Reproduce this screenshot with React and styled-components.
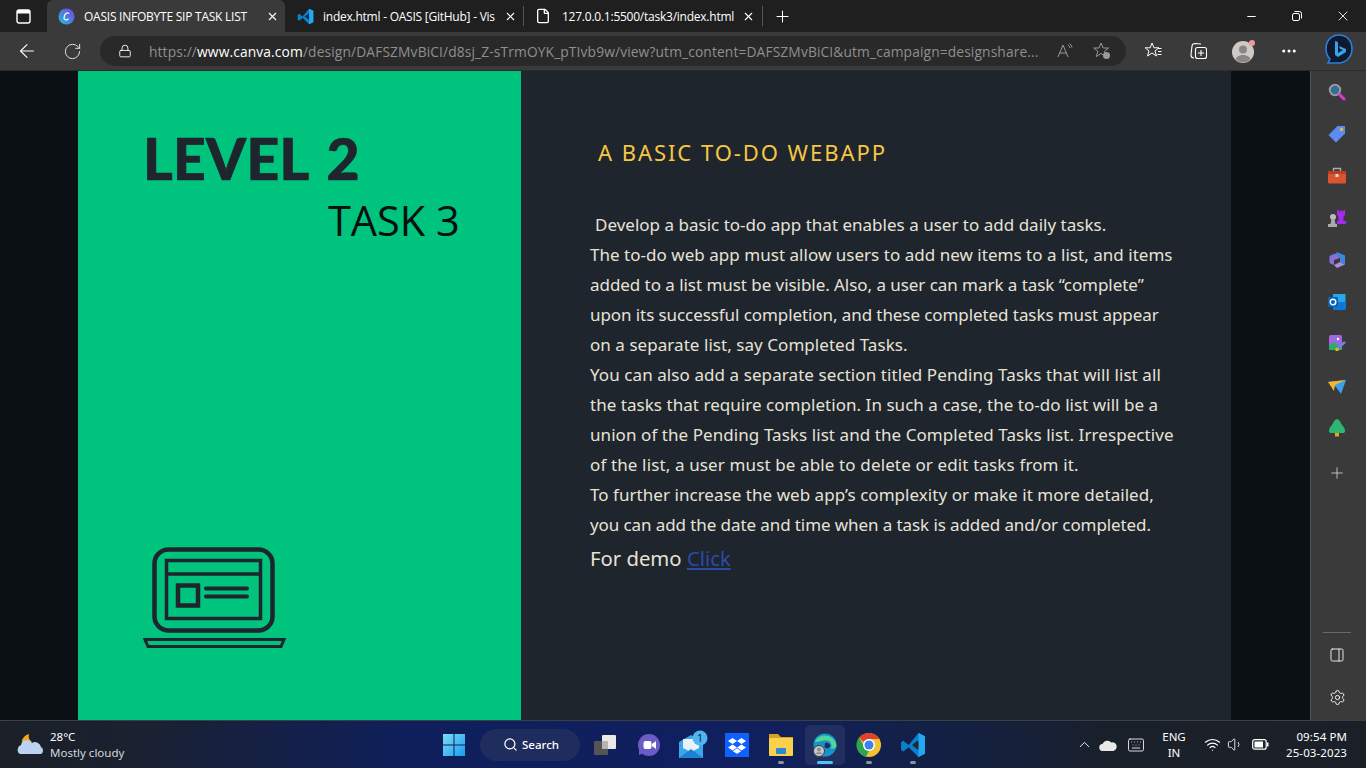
import React from 'react'
import styled, { createGlobalStyle } from 'styled-components'
import { ArrowLeft, RotateCw, Lock, X, Plus, Minus, File, Search, MoreHorizontal, Settings, PanelRight, ChevronUp, Wifi, Volume1, Keyboard } from 'lucide-react'

const GlobalStyle = createGlobalStyle`
  html, body { margin: 0; padding: 0; background: #1f1f1f; overflow: hidden; }
  * { box-sizing: border-box; }
  body { font-family: "Open Sans", "Liberation Sans", sans-serif; }
`

const Screen = styled.div`
  width: 1366px;
  height: 768px;
  display: flex;
  flex-direction: column;
  overflow: hidden;
`

const TabBar = styled.div`
  height: 32px;
  background: #1f1f1f;
  display: flex;
  align-items: flex-end;
  color: #fff;
  flex: none;
`

const WinSquare = styled.div`
  width: 47px;
  height: 32px;
  display: flex;
  align-items: center;
  justify-content: center;
  svg { display: block; }
`

const Tab = styled.div`
  width: ${p => p.$w}px;
  height: 32px;
  background: ${p => (p.$active ? '#3a3a3a' : 'transparent')};
  border-radius: 6px 6px 0 0;
  display: flex;
  align-items: center;
  padding: 0 0 0 ${p => p.$pad}px;
  flex: none;
`

const TabTitle = styled.span`
  font-size: 12px;
  letter-spacing: -0.24px;
  margin-left: ${p => p.$gap}px;
  width: ${p => p.$w}px;
  white-space: nowrap;
  color: #fff;
  flex: none;
`

const TabClose = styled(X)`
  margin-left: ${p => p.$gap}px;
  flex: none;
`

const TabSep = styled.div`
  width: 1px;
  height: 20px;
  background: #555;
  flex: none;
  align-self: center;
`

const NewTab = styled.div`
  width: 38px;
  height: 32px;
  display: flex;
  align-items: center;
  justify-content: center;
`

const WinControls = styled.div`
  margin-left: auto;
  display: flex;
  height: 32px;
  align-items: center;
`

const WinButton = styled.div`
  width: 46px;
  height: 32px;
  display: flex;
  align-items: center;
  justify-content: center;
`

const Toolbar = styled.div`
  height: 39px;
  background: #3a3a3a;
  display: flex;
  align-items: center;
  flex: none;
  border-bottom: 1px solid #2b2b2b;
  padding-left: 9px;
`

const ToolButton = styled.div`
  width: ${p => p.$w || 36}px;
  height: 32px;
  margin-left: ${p => p.$gap || 0}px;
  display: flex;
  align-items: center;
  justify-content: center;
  flex: none;
`

const AddressBar = styled.div`
  width: 1026px;
  height: 30px;
  margin-left: 1px;
  background: #292929;
  border-radius: 15px;
  display: flex;
  align-items: center;
  padding-left: 18px;
  flex: none;
`

const Url = styled.span`
  margin-left: 17px;
  width: 897px;
  font-size: 13.8px;
  color: #8f8f8f;
  white-space: nowrap;
  letter-spacing: 0.12px;
  flex: none;
  b { font-weight: 400; color: #fff; }
`

const AddressIcon = styled.svg`
  margin-left: ${p => p.$gap}px;
  flex: none;
`

const Middle = styled.div`
  flex: 1;
  display: flex;
  min-height: 0;
`

const Page = styled.div`
  width: 1310px;
  background: #0a1014;
  padding-left: 78px;
  flex: none;
`

const Slide = styled.div`
  width: 1153px;
  height: 100%;
  display: flex;
`

const GreenPanel = styled.div`
  width: 443px;
  background: #00c37e;
  padding: 54px 0 0 65px;
  display: flex;
  flex-direction: column;
`

const Level = styled.h1`
  margin: 0;
  font-family: "Lato", "Liberation Sans", sans-serif;
  font-weight: 900;
  font-size: 57px;
  line-height: 67px;
  letter-spacing: 0.3px;
  word-spacing: 5px;
  -webkit-text-stroke: 0.7px #1e252c;
  color: #1e252c;
  white-space: nowrap;
`

const Task = styled.div`
  margin: 0 0 0 185px;
  font-size: 41.5px;
  line-height: 56px;
  color: #0a0f10;
  white-space: nowrap;
`

const LaptopIcon = styled.svg`
  margin-top: 299px;
  display: block;
`

const TextPanel = styled.div`
  flex: 1;
  background: #1e252c;
  padding: 64px 0 0 69px;
  color: #e6e2d8;
`

const Heading = styled.h2`
  margin: 0 0 0 8px;
  font-family: "Noto Sans", sans-serif;
  font-weight: 400;
  font-size: 22px;
  line-height: 34px;
  letter-spacing: 1.95px;
  color: #f7c744;
`

const Body = styled.div`
  margin-top: 41px;
  font-family: "Noto Sans", sans-serif;
  font-size: 17px;
  line-height: 30px;
`

const Line = styled.div`
  white-space: nowrap;
  padding-left: ${p => p.$indent || 0}px;
  letter-spacing: ${p => p.$track || 0.03}px;
`

const Demo = styled.div`
  font-family: "Noto Sans", sans-serif;
  font-size: 20.3px;
  line-height: 34px;
  margin-top: 1px;
  a { color: #2c4aa8; text-decoration: underline; }
`

const SideBar = styled.div`
  width: 56px;
  background: #3a3a3a;
  border-left: 1px solid #555;
  padding-right: 3px;
  display: flex;
  flex-direction: column;
  align-items: center;
`

const SideIcon = styled.div`
  height: 42px;
  width: 100%;
  margin-top: ${p => p.$gap || 0}px;
  display: flex;
  align-items: center;
  justify-content: center;
  flex: none;
`

const SideBottom = styled.div`
  margin-top: auto;
  width: 100%;
  display: flex;
  flex-direction: column;
  align-items: center;
  padding-bottom: 2px;
`

const SideRule = styled.div`
  width: 28px;
  height: 1px;
  background: #6a6a6a;
  margin-bottom: 1px;
`

const Taskbar = styled.div`
  height: 48px;
  flex: none;
  background: linear-gradient(90deg, #1b2028 0%, #1a2130 10%, #0f1f5c 30%, #10205e 55%, #14203e 72%, #1a2029 82%, #1b2028 100%);
  border-top: 1px solid #3a3f48;
  display: flex;
  align-items: center;
  color: #fff;
`

const Weather = styled.div`
  display: flex;
  align-items: center;
  width: 442px;
  padding-left: 17px;
  flex: none;
`

const WeatherText = styled.div`
  margin-left: 5px;
  font-family: "Noto Sans", sans-serif;
  font-size: 11.5px;
  line-height: 16px;
  span { display: block; }
  span + span { color: #d5d8dc; }
`

const SearchPill = styled.div`
  width: 100px;
  height: 32px;
  border-radius: 16px;
  background: #1f2c5e;
  margin-left: 14px;
  display: flex;
  align-items: center;
  padding-left: 23px;
  font-family: "Noto Sans", sans-serif;
  font-size: 11.5px;
  font-weight: 500;
  flex: none;
  span { margin-left: 4px; }
`

const Pinned = styled.div`
  display: flex;
  align-items: center;
  margin-left: 3px;
`

const Pin = styled.div`
  width: 40px;
  height: 40px;
  margin: 0 2px;
  display: flex;
  align-items: center;
  justify-content: center;
  position: relative;
  border-radius: 5px;
  background: ${p => (p.$active ? 'rgba(255,255,255,0.07)' : 'transparent')};
  &::after {
    content: '';
    display: ${p => (p.$dot ? 'block' : 'none')};
    position: absolute;
    bottom: 1px;
    left: 50%;
    transform: translateX(-50%);
    width: ${p => (p.$active ? 16 : 6)}px;
    height: 3px;
    border-radius: 2px;
    background: ${p => (p.$active ? '#4fc3f7' : '#8d93a0')};
  }
`

const Tray = styled.div`
  margin-left: auto;
  display: flex;
  align-items: center;
  height: 100%;
  padding-right: 19px;
  font-family: "Noto Sans", sans-serif;
  font-size: 11.5px;
`

const Lang = styled.div`
  width: 50px;
  margin-left: 4px;
  text-align: center;
  line-height: 16px;
`

const Clock = styled.div`
  width: 70px;
  margin-left: 8px;
  text-align: right;
  line-height: 16px;
  white-space: nowrap;
  letter-spacing: 0.1px;
`

const VsCode = ({ size = 18 }) => (
  <svg width={size} height={size} viewBox="0 0 24 24">
    <path fill="#0a7fcc" d="M17 1l6 3v16l-6 3-9-9-5 4-2-1.5v-7L3 8l5 4z" />
    <path fill="#23a9f2" d="M17 1l6 3v16l-6 3z" />
    <path fill="#1f1f1f" d="M17 7.5L11 12l6 4.5z" opacity=".9" />
  </svg>
)

const sideIcons = [
  <svg key="s" width="20" height="20" viewBox="0 0 20 20"><circle cx="8" cy="8" r="5.2" fill="#2f6f98" stroke="#9a9a9a" strokeWidth="2" /><path d="M12.5 12.5L17 17" stroke="#d63ad8" strokeWidth="3" strokeLinecap="round" /></svg>,
  <svg key="t" width="20" height="20" viewBox="0 0 20 20"><path fill="#5b8cf5" d="M1.5 11l9-9h7.5v7.5l-9 9z" /><circle cx="14.5" cy="5.5" r="1.7" fill="#f2b632" /></svg>,
  <svg key="b" width="20" height="20" viewBox="0 0 20 20"><path fill="none" stroke="#aaa" strokeWidth="1.4" d="M6.5 5V2.5h7V5" /><rect x="1" y="5" width="18" height="12.5" rx="1.5" fill="#d9552f" /><rect x="1" y="5" width="18" height="3" fill="#b9411f" /><rect x="8.5" y="8" width="3" height="3" fill="#ddd" /></svg>,
  <svg key="c" width="20" height="20" viewBox="0 0 20 20"><path fill="#a32cf0" d="M10 2h1.8v1.5h1.6V2h1.4v1.5h1.6V2H18v5l-1.5 1.5V13H19v3h-9v-3h1.5V8.5L10 7z" /><circle cx="6" cy="9" r="3" fill="#bbb" /><path fill="#aaa" d="M4.5 11h3l1 5H10v3H1v-3h2.5z" /></svg>,
  <svg key="o" width="20" height="20" viewBox="0 0 20 20"><path fill="#3b86e0" d="M10 2l8 3.500v9L13 12V8L8 5.500z" /><path fill="#8a6fd6" d="M2.500 6L8 3.500 13 8l-6 2v5l-4.500-2z" /><path fill="#b08ae0" d="M7 15l6-3 5 2.500L10 18z" /></svg>,
  <svg key="m" width="20" height="20" viewBox="0 0 20 20"><path fill="#28a8ea" d="M6 2h12.5v14.5L14 18H6z" /><path fill="#0f78d4" d="M6 10l12.5 0v8H6z" /><rect x="1" y="5" width="10" height="10" rx="1" fill="#0364b8" /><circle cx="6" cy="10" r="2.8" fill="none" stroke="#fff" strokeWidth="1.4" /></svg>,
  <svg key="d" width="20" height="20" viewBox="0 0 20 20"><rect x="2" y="1" width="13" height="15" rx="2" fill="#a067e0" /><path fill="#2aaf66" d="M2 12l5-4 8 6v2H2z" /><path stroke="#7a7cf0" strokeWidth="2.4" d="M10 15L18 8" /><rect x="8.5" y="14" width="3" height="3" fill="#f0b020" /><circle cx="11" cy="5" r="1.2" fill="#fff" /></svg>,
  <svg key="p" width="20" height="20" viewBox="0 0 20 20"><path fill="#3aa0ee" d="M1 6l18-2-5 14-5-7z" /><path fill="#f2b632" d="M1 6l18-2-11 5-1 6z" /></svg>,
  <svg key="e" width="20" height="20" viewBox="0 0 20 20"><path fill="#2bb673" d="M10 1c2 0 4 4 5 6 2 2 3 4 3 6 0 1.5-1 2-2 2H4c-1 0-2-.5-2-2 0-2 1-4 3-6 1-2 3-6 5-6z" /><rect x="8" y="15" width="4" height="3.5" fill="#f0a020" /></svg>,
]

const pins = [
  { key: 'views', dot: false, icon: <svg width="26" height="26" viewBox="0 0 26 26"><rect x="10" y="3" width="14" height="14" rx="1" fill="#e8e8e8" /><rect x="2" y="9" width="14" height="14" rx="1" fill="#555" /><rect x="10" y="9" width="6" height="8" fill="#b5b5b5" /></svg> },
  { key: 'meet', dot: false, icon: <svg width="26" height="26" viewBox="0 0 26 26"><circle cx="13" cy="13" r="11" fill="#6b5bc4" /><path d="M3 17v6l5-2z" fill="#6b5bc4" /><rect x="7.5" y="9" width="8" height="8" rx="2" fill="#fff" /><path d="M16 12l4-3v8l-4-3z" fill="#fff" /></svg> },
  { key: 'mail', dot: false, icon: <svg width="30" height="30" viewBox="0 0 30 30"><path fill="#3aa7ec" d="M1 12L13 5l12 7v16H1z" /><path fill="#e8f2f8" d="M5 9h16v9l-8 4-8-4z" /><path fill="#1c82cf" d="M1 28l12-9 12 9z" /><circle cx="22" cy="8" r="7.500" fill="#4fb5f0" /><text x="22" y="11.500" textAnchor="middle" fontSize="10" fontFamily="Noto Sans" fill="#0c1b3a">1</text></svg> },
  { key: 'dropbox', dot: false, icon: <svg width="24" height="24" viewBox="0 0 24 24"><rect width="24" height="24" fill="#0f61fe" /><path fill="#fff" d="M7.5 5L12 8l-4.500 3L3 8zm9 0L21 8l-4.500 3L12 8zM7.500 11.500l4.500 3-4.500 3L3 14.500zm9 0l4.500 3-4.500 3-4.500-3zM7.800 18.200l4.200-3 4.200 3-4.200 2.500z" /></svg> },
  { key: 'files', dot: true, icon: <svg width="26" height="26" viewBox="0 0 26 26"><path fill="#d9a11d" d="M1 2h9l3 3h12v4H1z" /><rect x="1" y="6" width="24" height="18" rx="1" fill="#fbd14b" /><rect x="8" y="16" width="10" height="6" rx="1" fill="#2a8ad4" /></svg> },
  { key: 'edge', dot: true, active: true, icon: <svg width="26" height="26" viewBox="0 0 26 26"><circle cx="13" cy="13" r="11.500" fill="#1793c9" /><path fill="#4fd69a" d="M3 10C5 2 21 0 24.500 13c.3 3-3 4-6 3.500 3-4-1-9-6-8-5 .5-8 2-9.500 1.500z" /><path fill="#1f2c5e" d="M13 11c3-1 5 1 5.500 3-2 3-4 3-6 1z" /><circle cx="7" cy="19" r="5.500" fill="#c8c8c8" stroke="#3a3f48" /><circle cx="7" cy="17.500" r="2" fill="#8a8a8a" /><path d="M3.500 22c1-2.500 6-2.500 7 0z" fill="#8a8a8a" /></svg> },
  { key: 'chrome', dot: true, icon: <svg width="26" height="26" viewBox="0 0 26 26"><circle cx="13" cy="13" r="12" fill="#f2c230" /><path fill="#e0402f" d="M13 1a12 12 0 0 1 10.400 6H13a6 6 0 0 0-5.200 3L3 5.500A12 12 0 0 1 13 1z" /><path fill="#2ea44f" d="M3 5.500L8 14a6 6 0 0 0 5 5l-3 5.700A12 12 0 0 1 3 5.500z" /><circle cx="13" cy="13" r="6" fill="#fff" /><circle cx="13" cy="13" r="4.500" fill="#3b82f0" /></svg> },
  { key: 'vscode', dot: true, icon: <VsCode size={26} /> },
]

// track: the reference font is not installed, so each line is nudged to end where it ends there
const bodyLines = [
  { text: 'Develop a basic to-do app that enables a user to add daily tasks.', indent: 5, track: 0.01 },
  { text: 'The to-do web app must allow users to add new items to a list, and items' },
  { text: 'added to a list must be visible. Also, a user can mark a task “complete”', track: -0.05 },
  { text: 'upon its successful completion, and these completed tasks must appear', track: -0.08 },
  { text: 'on a separate list, say Completed Tasks.', track: 0.05 },
  { text: 'You can also add a separate section titled Pending Tasks that will list all', track: 0.08 },
  { text: 'the tasks that require completion. In such a case, the to-do list will be a', track: 0.04 },
  { text: 'union of the Pending Tasks list and the Completed Tasks list. Irrespective', track: 0.07 },
  { text: 'of the list, a user must be able to delete or edit tasks from it.', track: 0.13 },
  { text: 'To further increase the web app’s complexity or make it more detailed,', track: 0.04 },
  { text: 'you can add the date and time when a task is added and/or completed.', track: -0.09 },
]

export default function App() {
  return (
    <Screen>
      <GlobalStyle />
      <TabBar>
        <WinSquare>
          <svg width="15" height="15" viewBox="0 0 15 15"><rect x="1" y="1" width="13" height="13" rx="2" fill="none" stroke="#fff" strokeWidth="1.4" /><rect x="1" y="1" width="13" height="3.500" fill="#fff" /></svg>
        </WinSquare>
        <Tab $active $w={238} $pad={11}>
          <svg width="17" height="17" viewBox="0 0 17 17"><defs><linearGradient id="cv" x1="0" y1="1" x2="1" y2="0"><stop offset="0" stopColor="#19c4cf" /><stop offset="1" stopColor="#7d3cf0" /></linearGradient></defs><circle cx="8.500" cy="8.500" r="8" fill="url(#cv)" /><path d="M11 5.500C9 3.800 6 6.500 6 10c0 2 2.500 2.500 4.500.8" fill="none" stroke="#fff" strokeWidth="1.300" /></svg>
          <TabTitle $gap={9} $w={180}>OASIS INFOBYTE SIP TASK LIST</TabTitle>
          <TabClose size={13} color="#fff" $gap={2} />
        </Tab>
        <Tab $w={238} $pad={12}>
          <VsCode size={17} />
          <TabTitle $gap={9} $w={176}>index.html - OASIS [GitHub] - Vis</TabTitle>
          <TabClose size={13} color="#fff" $gap={5} />
        </Tab>
        <TabSep />
        <Tab $w={238} $pad={11}>
          <File size={16} color="#fff" />
          <TabTitle $gap={11} $w={172}>127.0.0.1:5500/task3/index.html</TabTitle>
          <TabClose size={13} color="#fff" $gap={8} />
        </Tab>
        <TabSep />
        <NewTab><Plus size={19} color="#fff" strokeWidth={1.300} /></NewTab>
        <WinControls>
          <WinButton><Minus size={13} color="#fff" /></WinButton>
          <WinButton>
            <svg width="12" height="12" viewBox="0 0 12 12" fill="none" stroke="#fff"><rect x="1.500" y="3.500" width="7" height="7" rx="1.500" /><path d="M3.500 1.500h5a2 2 0 0 1 2 2v5" /></svg>
          </WinButton>
          <WinButton><X size={16} color="#fff" strokeWidth={1.300} /></WinButton>
        </WinControls>
      </TabBar>
      <Toolbar>
        <ToolButton><ArrowLeft size={22} color="#fff" strokeWidth={1.200} /></ToolButton>
        <ToolButton $w={54}><RotateCw size={19} color="#e8e8e8" strokeWidth={1.200} /></ToolButton>
        <AddressBar>
          <Lock size={14} color="#fff" strokeWidth={1.500} />
          <Url>https://<b>www.canva.com</b>/design/DAFSZMvBiCI/d8sj_Z-sTrmOYK_pTIvb9w/view?utm_content=DAFSZMvBiCI&amp;utm_campaign=designshare...</Url>
          <AddressIcon $gap={10} width="18" height="18" viewBox="0 0 18 18" fill="none" stroke="#999"><path d="M2 15L7 3l5 12M4 11h6" /><path d="M12 3a4 4 0 0 1 2 3M13.500 1.500a6 6 0 0 1 2.500 4" /></AddressIcon>
          <AddressIcon $gap={18} width="20" height="20" viewBox="0 0 20 20" fill="none" stroke="#999"><path d="M9 2l2.200 5h5.300l-4.200 3.300 1.500 5.200L9 12.500 4.400 15.500l1.500-5.200L1.700 7h5.300z" /><circle cx="14.500" cy="14.500" r="3.500" fill="#999" stroke="none" /></AddressIcon>
        </AddressBar>
        <ToolButton $w={38} $gap={9}>
          <svg width="20" height="20" viewBox="0 0 20 20" fill="none" stroke="#fff" strokeWidth="1"><path d="M8 2l2 4.800h5L11 10l1.500 5L8 12l-4.500 3L5 10 1.200 6.800h5z" /><path d="M14 7.500h3.500M14 10.500h3.500M13.500 13.500h4" /></svg>
        </ToolButton>
        <ToolButton $w={52}>
          <svg width="20" height="20" viewBox="0 0 20 20" fill="none" stroke="#fff" strokeWidth="1.100"><path d="M5 17c-2 0-3-1-3-3l1-9c.2-1.500 1.500-2.500 3-2.500l6 .5" /><rect x="6.500" y="6.500" width="11" height="11" rx="2" /><path d="M12 9v6M9 12h6" /></svg>
        </ToolButton>
        <ToolButton $w={38}>
          <svg width="26" height="26" viewBox="0 0 26 26"><circle cx="12" cy="14" r="11" fill="#cfcac6" /><circle cx="12" cy="11.500" r="4" fill="#8a8683" /><path d="M4.500 21.500c1.500-6 13.500-6 15 0a11 11 0 0 1-15 0z" fill="#8a8683" /><circle cx="21" cy="5" r="3" fill="#f19a96" /></svg>
        </ToolButton>
        <ToolButton $w={52}><MoreHorizontal size={18} color="#fff" /></ToolButton>
        <ToolButton $w={32} $gap={8}>
          <svg width="32" height="36" viewBox="0 0 32 36"><path fill="#101a2e" stroke="#2b7fe0" strokeWidth="1.600" d="M16 2c8 0 13 6 13 14s-6 14-14 14H5l2-4C4 23 3 20 3 16 3 8 8 2 16 2z" /><path fill="#35a2ec" d="M12 8l3 1v11l5-3-3-1-1-3 7 3v3l-8 5-3-2z" /></svg>
        </ToolButton>
      </Toolbar>
      <Middle>
        <Page>
          <Slide>
            <GreenPanel>
              <Level>LEVEL 2</Level>
              <Task>TASK 3</Task>
              <LaptopIcon width="144" height="102" viewBox="0 0 144 102" fill="none" stroke="#1e252c">
                <rect x="11.500" y="2.500" width="118" height="81" rx="14" strokeWidth="4.500" />
                <rect x="23.500" y="13.500" width="94" height="58" strokeWidth="3.500" />
                <path d="M23 27h95" strokeWidth="3.500" />
                <rect x="35" y="38.500" width="20" height="20" strokeWidth="4.500" />
                <path d="M63 41.500h41M63 49.500h41" strokeWidth="4" strokeLinecap="round" />
                <path d="M2 92.500h139l-3 7H5z" strokeWidth="3" />
              </LaptopIcon>
            </GreenPanel>
            <TextPanel>
              <Heading>A BASIC TO-DO WEBAPP</Heading>
              <Body>
                {bodyLines.map(line => (
                  <Line key={line.text} $indent={line.indent} $track={line.track}>{line.text}</Line>
                ))}
              </Body>
              <Demo>For demo <a href="#click">Click</a></Demo>
            </TextPanel>
          </Slide>
        </Page>
        <SideBar>
          {sideIcons.map(icon => <SideIcon key={icon.key}>{icon}</SideIcon>)}
          <SideIcon $gap={3}><Plus size={18} color="#ccc" strokeWidth={1.200} /></SideIcon>
          <SideBottom>
            <SideRule />
            <SideIcon><PanelRight size={16} color="#fff" strokeWidth={1.300} /></SideIcon>
            <SideIcon><Settings size={17} color="#fff" strokeWidth={1.300} /></SideIcon>
          </SideBottom>
        </SideBar>
      </Middle>
      <Taskbar>
        <Weather>
          <svg width="28" height="26" viewBox="0 0 28 26"><path fill="#f5a623" d="M12 2c-1 3 0 6 3 8l-10 1c-1-4 3-8 7-9z" /><path fill="#b9d3f0" d="M3 22a5 5 0 0 1 1-9 6 6 0 0 1 11-2 6 6 0 0 1 9 4 4 4 0 0 1 0 7z" /></svg>
          <WeatherText><span>28°C</span><span>Mostly cloudy</span></WeatherText>
        </Weather>
        <svg width="24" height="24" viewBox="0 0 24 24"><defs><linearGradient id="wn" x1="0" y1="0" x2="1" y2="1"><stop offset="0" stopColor="#7adcf5" /><stop offset="1" stopColor="#1a9cf0" /></linearGradient></defs><path fill="url(#wn)" d="M1 1h10.500v10.500H1zM12.500 1H23v10.500H12.500zM1 12.500h10.500V23H1zM12.500 12.500H23V23H12.500z" /></svg>
        <SearchPill><Search size={15} color="#fff" /><span>Search</span></SearchPill>
        <Pinned>
          {pins.map(pin => (
            <Pin key={pin.key} $dot={pin.dot} $active={pin.active}>{pin.icon}</Pin>
          ))}
        </Pinned>
        <Tray>
          <ChevronUp size={17} color="#eee" strokeWidth={1.400} />
          <svg width="18" height="12" viewBox="0 0 18 12" style={{ marginLeft: 6 }}><path fill="#e8e8e8" d="M4 12a3.500 3.500 0 0 1-.5-7A5 5 0 0 1 12 3.500a4 4 0 0 1 2.500 8.500z" /></svg>
          <Keyboard size={18} color="#eee" strokeWidth={1.200} style={{ marginLeft: 10 }} />
          <Lang>ENG<br />IN</Lang>
          <Wifi size={17} color="#fff" strokeWidth={1.600} style={{ marginLeft: 5 }} />
          <Volume1 size={17} color="#eee" strokeWidth={1.300} style={{ marginLeft: 6 }} />
          <svg width="17" height="11" viewBox="0 0 17 11" fill="none" stroke="#fff" style={{ marginLeft: 8 }}><rect x=".7" y=".7" width="13.500" height="9.500" rx="2" strokeWidth="1.200" /><rect x="2.500" y="2.500" width="8.500" height="6" fill="#fff" stroke="none" /><rect x="15" y="3.500" width="1.500" height="4" fill="#fff" stroke="none" /></svg>
          <Clock>09:54 PM<br />25-03-2023</Clock>
        </Tray>
      </Taskbar>
    </Screen>
  )
}
